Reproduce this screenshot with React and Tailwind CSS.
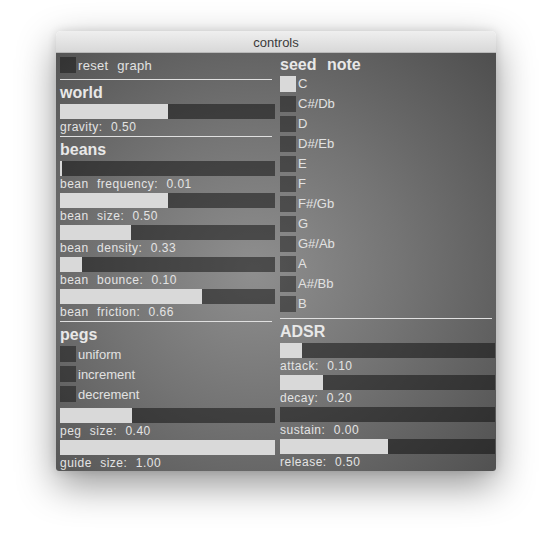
import React from "react";

const font = { fontFamily: '"Liberation Sans", Arial, sans-serif' };

function Slider({ label, value, fill }) {
  const frac = fill ?? value;
  return (
    <div className="flex flex-col">
      <div className="h-[15px] w-[215px] bg-[rgba(10,10,10,0.5)]">
        <div className="h-full bg-[#d9d9d9]" style={{ width: `${frac * 100}%` }} />
      </div>
      <div className="h-[17px] text-[12px] leading-[17px] tracking-[0.5px] [word-spacing:4.5px] text-[#e4e4e4] whitespace-nowrap">
        {label}: {value.toFixed(2)}
      </div>
    </div>
  );
}

function Check({ label, on = false, wide = false, low = false }) {
  return (
    <div className="flex h-[16px] items-start gap-[2px]">
      <div className={`h-[16px] w-[16px] shrink-0 ${on ? "bg-[#d9d9d9]" : "bg-[rgba(10,10,10,0.45)]"}`} />
      <span
        className={`text-[13px] text-[#e2e2e2] whitespace-nowrap ${low ? "leading-[18px]" : "leading-[16px]"} ${
          wide ? "tracking-[0.3px] [word-spacing:5px]" : ""
        }`}
      >
        {label}
      </span>
    </div>
  );
}

function Heading({ children, className = "h-[24px] leading-[26px]" }) {
  return (
    <div className={`text-[16px] font-bold text-[#e8e8e8] [word-spacing:6px] ${className}`}>
      {children}
    </div>
  );
}

const Rule = ({ className = "" }) => <div className={`h-px w-[212px] shrink-0 bg-[#e0e0e0] ${className}`} />;

const notes = ["C", "C#/Db", "D", "D#/Eb", "E", "F", "F#/Gb", "G", "G#/Ab", "A", "A#/Bb", "B"];

export default function App() {
  return (
    <div className="min-h-[552px] w-[552px] bg-white pt-[31px] pl-[56px]" style={font}>
      <div className="w-[440px] rounded-t-[5px] rounded-b-[3px] shadow-[0_14px_38px_rgba(0,0,0,0.42),0_0_10px_rgba(0,0,0,0.12)]">
        <div className="h-[22px] rounded-t-[5px] border-b border-[#b9b9b9] bg-gradient-to-b from-[#efefef] to-[#d8d8d8] pt-[3px] text-center text-[13px] leading-[18px] text-[#3a3a3a]">
          controls
        </div>
        <div className="flex h-[418px] gap-[5px] overflow-hidden rounded-b-[3px] bg-[radial-gradient(ellipse_75%_75%_at_45%_52%,#8f8f8f_0%,#747474_45%,#4f4f4f_100%)] pl-[4px]">
          {/* left column */}
          <div className="flex w-[215px] flex-col pt-[4px]">
            <Check label="reset graph" wide low />
            <Rule className="mt-[6px]" />
            <Heading>world</Heading>
            <Slider label="gravity" value={0.5} />
            <Rule />
            <Heading>beans</Heading>
            <Slider label="bean frequency" value={0.01} />
            <Slider label="bean size" value={0.5} />
            <Slider label="bean density" value={0.33} />
            <Slider label="bean bounce" value={0.1} />
            <Slider label="bean friction" value={0.66} />
            <Rule />
            <Heading>pegs</Heading>
            <div className="flex flex-col gap-[4px]">
              <Check label="uniform" low />
              <Check label="increment" low />
              <Check label="decrement" low />
            </div>
            <div className="mt-[6px]">
              <Slider label="peg size" value={0.4} fill={0.335} />
              <Slider label="guide size" value={1.0} />
            </div>
          </div>
          {/* right column */}
          <div className="flex w-[215px] flex-col">
            <Heading className="h-[23px] leading-[24px]">seed note</Heading>
            <div className="flex flex-col gap-[4px]">
              {notes.map((n, i) => (
                <Check key={n} label={n} on={i === 0} />
              ))}
            </div>
            <Rule className="mt-[6px]" />
            <Heading>ADSR</Heading>
            <Slider label="attack" value={0.1} />
            <Slider label="decay" value={0.2} />
            <Slider label="sustain" value={0.0} />
            <Slider label="release" value={0.5} />
          </div>
        </div>
      </div>
    </div>
  );
}
